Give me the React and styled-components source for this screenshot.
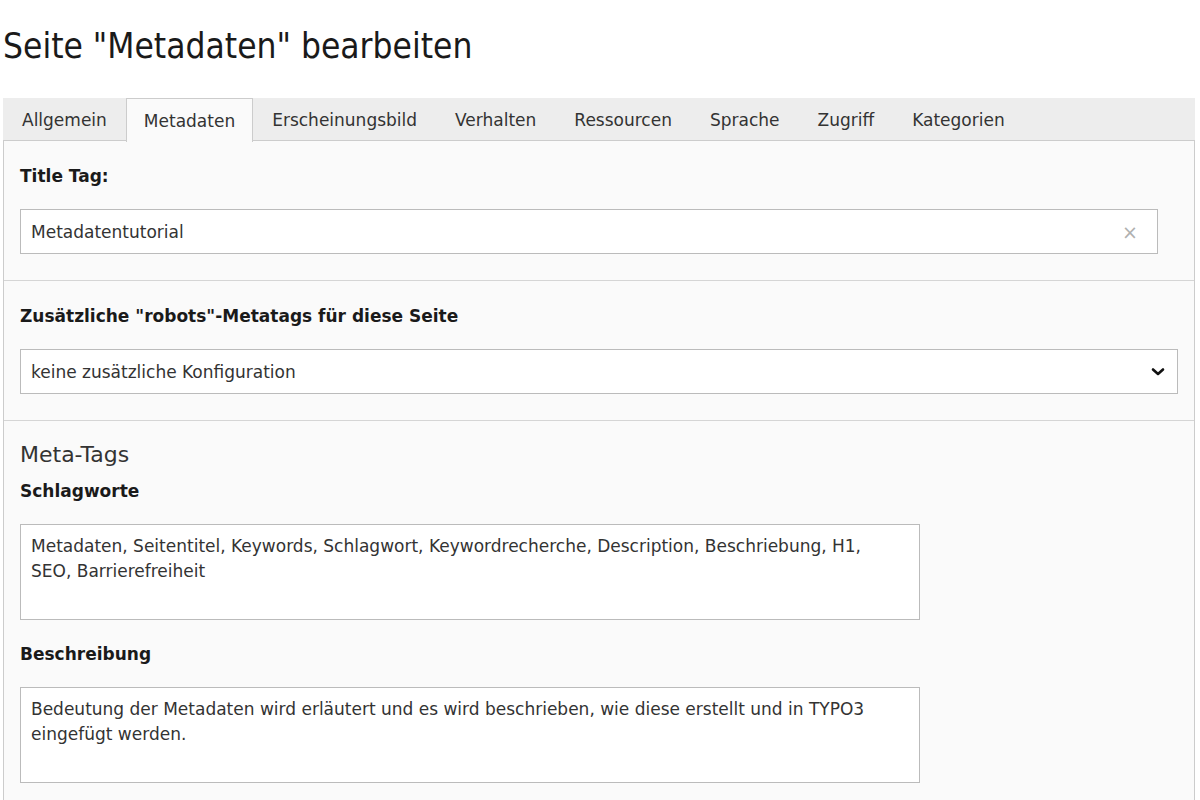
import React from 'react'
import styled, { createGlobalStyle } from 'styled-components'

const GlobalStyle = createGlobalStyle`
  html, body {
    margin: 0;
    padding: 0;
    background: #ffffff;
  }
  body {
    font-family: "DejaVu Sans", Verdana, sans-serif;
    color: #212121;
  }
`

const Page = styled.div`
  width: 1200px;
  height: 800px;
  overflow: hidden;
  padding: 0 5px 0 3px;
  box-sizing: border-box;
`

const Title = styled.h1`
  margin: 0;
  padding-top: 26px;
  height: 98px;
  box-sizing: border-box;
  font-family: "DejaVu Sans Condensed", "DejaVu Sans", sans-serif;
  font-size: 35px;
  font-weight: normal;
  line-height: 40px;
  color: #1a1a1a;
`

const TabBar = styled.div`
  display: flex;
  height: 43px;
  background: #ededed;
  border-bottom: 1px solid #cccccc;
  box-sizing: border-box;
`

const Tab = styled.div`
  display: flex;
  align-items: center;
  padding: 0 ${p => (p.active ? '17px' : '18px')};
  height: ${p => (p.active ? '44px' : '42px')};
  box-sizing: border-box;
  font-size: 17px;
  color: #333;
  background: ${p => (p.active ? '#fafafa' : 'transparent')};
  border: 1px solid ${p => (p.active ? '#cccccc' : 'transparent')};
  border-bottom: none;
`

const Panel = styled.div`
  background: #fafafa;
  border-left: 1px solid #cccccc;
  border-right: 1px solid #cccccc;
`

const Section = styled.div`
  padding: 24px 16px 26px;
  border-bottom: 1px solid #d5d5d5;
  &:last-child {
    border-bottom: none;
  }
`

const Label = styled.div`
  font-weight: bold;
  font-size: 17px;
  line-height: 22px;
  color: #1a1a1a;
  margin-bottom: 22px;
`

const Heading = styled.div`
  font-size: 22px;
  line-height: 28px;
  color: #333;
  margin-top: -4px;
  margin-bottom: 11px;
`

const Field = styled.div`
  display: flex;
  align-items: center;
  justify-content: space-between;
  width: ${p => p.width}px;
  height: 45px;
  box-sizing: border-box;
  padding: 0 12px 0 10px;
  background: #ffffff;
  border: 1px solid #bbbbbb;
  font-size: 17px;
  color: #333;
`

const Clear = styled.span`
  color: #b0b0b0;
  font-size: 19px;
  padding-right: 7px;
`

const TextArea = styled.div`
  width: 900px;
  height: 96px;
  box-sizing: border-box;
  padding: 9px 24px 9px 10px;
  background: #ffffff;
  border: 1px solid #bbbbbb;
  font-size: 17px;
  line-height: 25px;
  color: #333;
  margin-bottom: 23px;
`

const Chevron = () => (
  <svg width="14" height="10" viewBox="0 0 14 10">
    <path d="M2 2.5 L7 7 L12 2.5" fill="none" stroke="#111" strokeWidth="2.6" strokeLinecap="round" strokeLinejoin="round" />
  </svg>
)

const tabs = ['Allgemein', 'Metadaten', 'Erscheinungsbild', 'Verhalten', 'Ressourcen', 'Sprache', 'Zugriff', 'Kategorien']

const App = () => {
  return (
    <Page>
      <GlobalStyle />
      <Title>Seite "Metadaten" bearbeiten</Title>
      <TabBar>
        {tabs.map(t => (
          <Tab key={t} active={t === 'Metadaten'}>{t}</Tab>
        ))}
      </TabBar>
      <Panel>
        <Section>
          <Label>Title Tag:</Label>
          <Field width={1138}>
            <span>Metadatentutorial</span>
            <Clear>×</Clear>
          </Field>
        </Section>
        <Section>
          <Label>Zusätzliche "robots"-Metatags für diese Seite</Label>
          <Field width={1158}>
            <span>keine zusätzliche Konfiguration</span>
            <Chevron />
          </Field>
        </Section>
        <Section>
          <Heading>Meta-Tags</Heading>
          <Label>Schlagworte</Label>
          <TextArea>
            Metadaten, Seitentitel, Keywords, Schlagwort, Keywordrecherche, Description, Beschriebung, H1, SEO, Barrierefreiheit
          </TextArea>
          <Label>Beschreibung</Label>
          <TextArea>
            Bedeutung der Metadaten wird erläutert und es wird beschrieben, wie diese erstellt und in TYPO3 eingefügt werden.
          </TextArea>
        </Section>
      </Panel>
    </Page>
  )
}

export default App
